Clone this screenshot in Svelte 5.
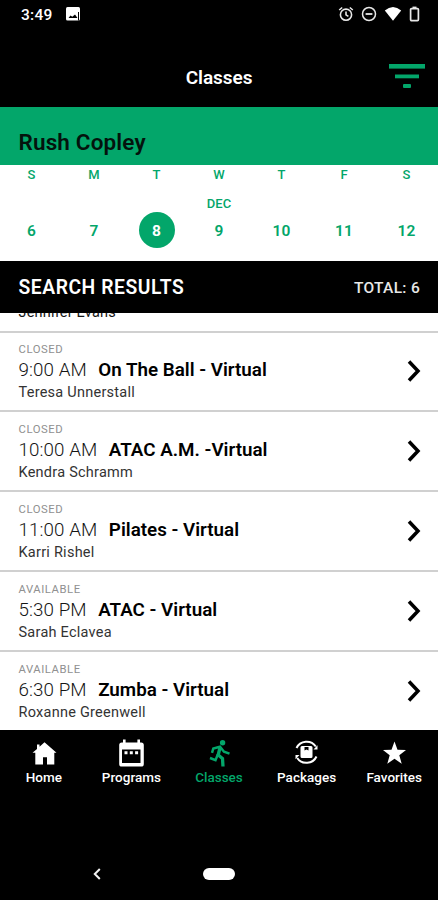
<script lang="ts">
    type ClassItem = { status: string; time: string; name: string; instructor: string };

    const days = [
        { label: 'S', date: 6 },
        { label: 'M', date: 7 },
        { label: 'T', date: 8 },
        { label: 'W', date: 9, month: 'DEC' },
        { label: 'T', date: 10 },
        { label: 'F', date: 11 },
        { label: 'S', date: 12 }
    ];

    const classes: ClassItem[] = [
        { status: 'CLOSED', time: '9:00 AM', name: 'On The Ball - Virtual', instructor: 'Teresa Unnerstall' },
        { status: 'CLOSED', time: '10:00 AM', name: 'ATAC A.M. -Virtual', instructor: 'Kendra Schramm' },
        { status: 'CLOSED', time: '11:00 AM', name: 'Pilates - Virtual', instructor: 'Karri Rishel' },
        { status: 'AVAILABLE', time: '5:30 PM', name: 'ATAC - Virtual', instructor: 'Sarah Eclavea' },
        { status: 'AVAILABLE', time: '6:30 PM', name: 'Zumba - Virtual', instructor: 'Roxanne Greenwell' }
    ];

    const tabs = ['Home', 'Programs', 'Classes', 'Packages', 'Favorites'];

    let selectedDate = $state(8);
    let activeTab = $state('Classes');
</script>

<div class="app">
    <div class="status">
        <span class="status__time">3:49</span>
        <svg width="14" height="14" viewBox="0 0 14 14">
            <rect width="14" height="13.5" rx="1.5" fill="#fff" />
            <path d="M2.5 11l2-2.5 1.8 1.3L9 7.5l2.5 3.5z" fill="#000" />
            <path d="M12.5 5v8.5" stroke="#000" stroke-width="1" />
        </svg>
        <div class="status__icons">
            <svg width="16" height="16" viewBox="0 0 16 16" fill="none" stroke="#e8e8e8" stroke-width="1.6">
                <circle cx="8" cy="8.7" r="5.6" />
                <path d="M1.2 4l3-2.5M14.8 4l-3-2.5M8 5.5v3.4l2.4 1.5" />
            </svg>
            <svg width="16" height="16" viewBox="0 0 16 16" fill="none" stroke="#e8e8e8" stroke-width="1.5">
                <circle cx="8" cy="8" r="6.5" />
                <path d="M4.6 8h6.8" stroke-width="1.8" />
            </svg>
            <svg width="18" height="16" viewBox="0 0 18 16">
                <path d="M.8 4.5Q9-2.6 17.2 4.5L9 14.7z" fill="#fff" />
            </svg>
            <svg width="11" height="16" viewBox="0 0 11 16" fill="none" stroke="#e8e8e8">
                <rect x="1.6" y="2.6" width="7.8" height="12" rx="1" stroke-width="1.7" />
                <path d="M3.5 1.4h4" stroke-width="1.6" />
            </svg>
        </div>
    </div>

    <header class="header">
        <h1>Classes</h1>
        <button class="header__filter" type="button" aria-label="Filter">
            <svg width="36" height="25" viewBox="0 0 36 25" fill="#03a66a">
                <rect x="0" y="0" width="36" height="4.6" />
                <rect x="6" y="10.5" width="24" height="3.8" />
                <rect x="14" y="20" width="8" height="4" rx="1" />
            </svg>
        </button>
    </header>

    <div class="location">Rush Copley</div>

    <div class="calendar">
        {#each days as day}
            <button class="day" type="button" onclick={() => (selectedDate = day.date)}>
                <span class="day__label">{day.label}</span>
                <span class="day__month">{day.month ?? ''}</span>
                <span class="day__date" class:selected={day.date === selectedDate}>{day.date}</span>
            </button>
        {/each}
    </div>

    <div class="results">
        <h2>SEARCH RESULTS</h2>
        <span>TOTAL: 6</span>
    </div>

    <div class="list">
        <div class="previous">Jennifer Evans</div>
        {#each classes as item}
            <div class="row">
                <div class="row__body">
                    <div class="row__status">{item.status}</div>
                    <div class="row__title"><span class="row__time">{item.time}</span><b>{item.name}</b></div>
                    <div class="row__instructor">{item.instructor}</div>
                </div>
                <svg width="14" height="24" viewBox="0 0 14 24" fill="none" stroke="#000" stroke-width="3.5">
                    <path d="M2 2.5L11 12l-9 9.5" />
                </svg>
            </div>
        {/each}
    </div>

    <nav class="tabs">
        {#each tabs as tab}
            <button class="tab" class:active={tab === activeTab} type="button" onclick={() => (activeTab = tab)}>
                <svg width="28" height="28" viewBox="0 0 28 28" fill="currentColor">
                    {#if tab === 'Home'}
                        <path d="M14.5 3.3L26.5 13.8H24.3V25.5H17V18.3H13V25.5H5.3V13.8H2.5L7 9.9V5.5H9.5V7.7z" />
                    {:else if tab === 'Programs'}
                        <path fill-rule="evenodd" d="M6 .5h2.6v3h11.8v-3H23v3h1.2q2.6 0 2.6 2.6V25q0 2.6-2.6 2.6H4.8Q2.2 27.6 2.2 25V6.1Q2.2 3.5 4.8 3.5H6zM5 10.5V24H23.5V10.5z" />
                        <path d="M7.5 12.2h3v3h-3zM12.8 12.2h3v3h-3zM18.1 12.2h3v3h-3z" />
                    {:else if tab === 'Classes'}
                        <circle cx="17.6" cy="3.8" r="2.7" />
                        <g fill="none" stroke="currentColor" stroke-width="2.5">
                            <path d="M7 13.8L8.3 9.5 15 7.7l4 5 5.5 2" />
                            <path d="M15 8.5L13.2 16l4.3 3.5.5 8" stroke-width="3.3" />
                            <path d="M12.8 15.5l-2.3 5.7L5 19" />
                        </g>
                    {:else if tab === 'Packages'}
                        <g fill="none" stroke="currentColor" stroke-width="2">
                            <path d="M3.5 9A11 10.6 0 0 1 22.800 7.500" />
                            <path d="M23.500 17.500A11 10.600 0 0 1 4.200 19" />
                        </g>
                        <path d="M24.500 6.200V10.500H20.500zM2.500 20.300V16H6.500z" />
                        <path fill-rule="evenodd" d="M9 7h9q1.500 0 1.500 1.500v9q0 1.500-1.500 1.500H9Q7.500 19 7.500 17.500V8.500Q7.500 7 9 7zM11.500 8v3.600l2-1.100 2 1.100V8z" />
                    {:else}
                        <path d="M14.5 2.5L17.5 10.7 26 11 19.3 16.2 21.7 24.7 14.5 19.8 7.3 24.7 9.7 16.2 3 11 11.5 10.7z" />
                    {/if}
                </svg>
                <span>{tab}</span>
            </button>
        {/each}
    </nav>

    <div class="system">
        <svg width="10" height="14" viewBox="0 0 10 14" fill="none" stroke="#f2f2f2" stroke-width="2">
            <path d="M7.8 2L2.8 7l5 5" />
        </svg>
        <span class="system__pill"></span>
    </div>
</div>

<style>
    :global(body) {
        background: #000;
    }

    .app {
        display: flex;
        flex-direction: column;
        width: 438px;
        height: 900px;
        overflow: hidden;
        background: #000;
        color: #fff;
        font-family: Roboto, sans-serif;
    }

    button {
        padding: 0;
        border: none;
        background: none;
        color: inherit;
        font-family: inherit;
        cursor: pointer;
    }

    svg {
        display: block;
        flex: none;
    }

    .status {
        display: flex;
        align-items: center;
        box-sizing: border-box;
        height: 30px;
        padding: 0 18px 2px 21px;
    }

    .status__time {
        width: 44.5px;
        padding-top: 1px;
        font-size: 15.5px;
        font-weight: 500;
        letter-spacing: 0.3px;
        line-height: 20px;
        white-space: nowrap;
    }

    .status__icons {
        display: flex;
        align-items: center;
        gap: 7px;
        margin-left: auto;
    }

    .header {
        display: grid;
        grid-template-columns: 1fr auto 1fr;
        align-items: center;
        box-sizing: border-box;
        height: 77px;
        padding: 16px 13px 0;
    }

    .header h1 {
        grid-column: 2;
        margin: 0;
        padding-top: 1px;
        font-size: 19px;
        font-weight: 600;
        letter-spacing: -0.05px;
    }

    .header__filter {
        justify-self: end;
    }

    .location {
        box-sizing: border-box;
        height: 58px;
        padding: 21px 18.5px 0;
        background: #03a66a;
        color: #04130d;
        font-size: 22.5px;
        font-weight: 600;
        letter-spacing: 0.15px;
        line-height: 28px;
    }

    .calendar {
        display: grid;
        grid-template-columns: repeat(7, 62.5px);
        justify-content: center;
        height: 96px;
        background: #fff;
        color: #03a66a;
    }

    .day {
        display: flex;
        flex-direction: column;
        align-items: center;
        font-weight: 500;
    }

    .day__label {
        height: 20px;
        font-size: 13px;
        line-height: 20px;
    }

    .day__month {
        height: 27px;
        font-size: 13px;
        line-height: 38px;
    }

    .day__date {
        width: 36px;
        height: 36px;
        border-radius: 50%;
        font-size: 15.5px;
        font-weight: 600;
        letter-spacing: 0.2px;
        line-height: 38px;
        text-align: center;
    }

    .day__date.selected {
        background: #03a66a;
        color: #fff;
        font-weight: 700;
    }

    .results {
        display: flex;
        align-items: center;
        justify-content: space-between;
        box-sizing: border-box;
        height: 52px;
        padding: 1px 18px 0 18.5px;
    }

    .results h2 {
        margin: 0;
        font-size: 19.3px;
        font-weight: 600;
        letter-spacing: 0.55px;
    }

    .results span {
        color: #e8e8e8;
        font-size: 15.5px;
        font-weight: 500;
        letter-spacing: 0.3px;
    }

    .list {
        height: 417px;
        overflow: hidden;
        background: #fff;
        color: #151515;
    }

    .previous {
        height: 17.5px;
        margin-left: 18.5px;
        font-size: 14.5px;
        letter-spacing: 0.2px;
        line-height: 0;
    }

    .row {
        display: flex;
        align-items: center;
        justify-content: space-between;
        box-sizing: border-box;
        height: 79.8px;
        padding: 0 17px 0 18.5px;
        border-top: 2px solid #d0d0d0;
    }

    .row__body {
        padding-top: 3px;
    }

    .row__status {
        color: #909090;
        font-size: 11.3px;
        letter-spacing: 0.55px;
        line-height: 15px;
    }

    .row__title {
        font-size: 18.8px;
        line-height: 26px;
        white-space: nowrap;
    }

    .row__time {
        margin-right: 11.5px;
        font-weight: 360;
        letter-spacing: 0.08px;
    }

    .row__title b {
        color: #000;
        font-weight: 600;
    }

    .row__instructor {
        color: #333;
        font-size: 14.5px;
        letter-spacing: 0.25px;
        line-height: 20px;
    }

    .tabs {
        display: grid;
        grid-template-columns: repeat(5, 87.6px);
        height: 118px;
    }

    .tab {
        display: flex;
        flex-direction: column;
        align-items: center;
        padding-top: 9px;
        font-size: 13.5px;
        font-weight: 500;
        line-height: 20px;
    }

    .tab.active {
        color: #03a66a;
    }

    .system {
        display: grid;
        grid-template-columns: 1fr auto 1fr;
        align-items: center;
        height: 52px;
    }

    .system svg {
        margin-left: 92px;
    }

    .system__pill {
        width: 32px;
        height: 12px;
        border-radius: 6px;
        background: #fff;
    }
</style>
